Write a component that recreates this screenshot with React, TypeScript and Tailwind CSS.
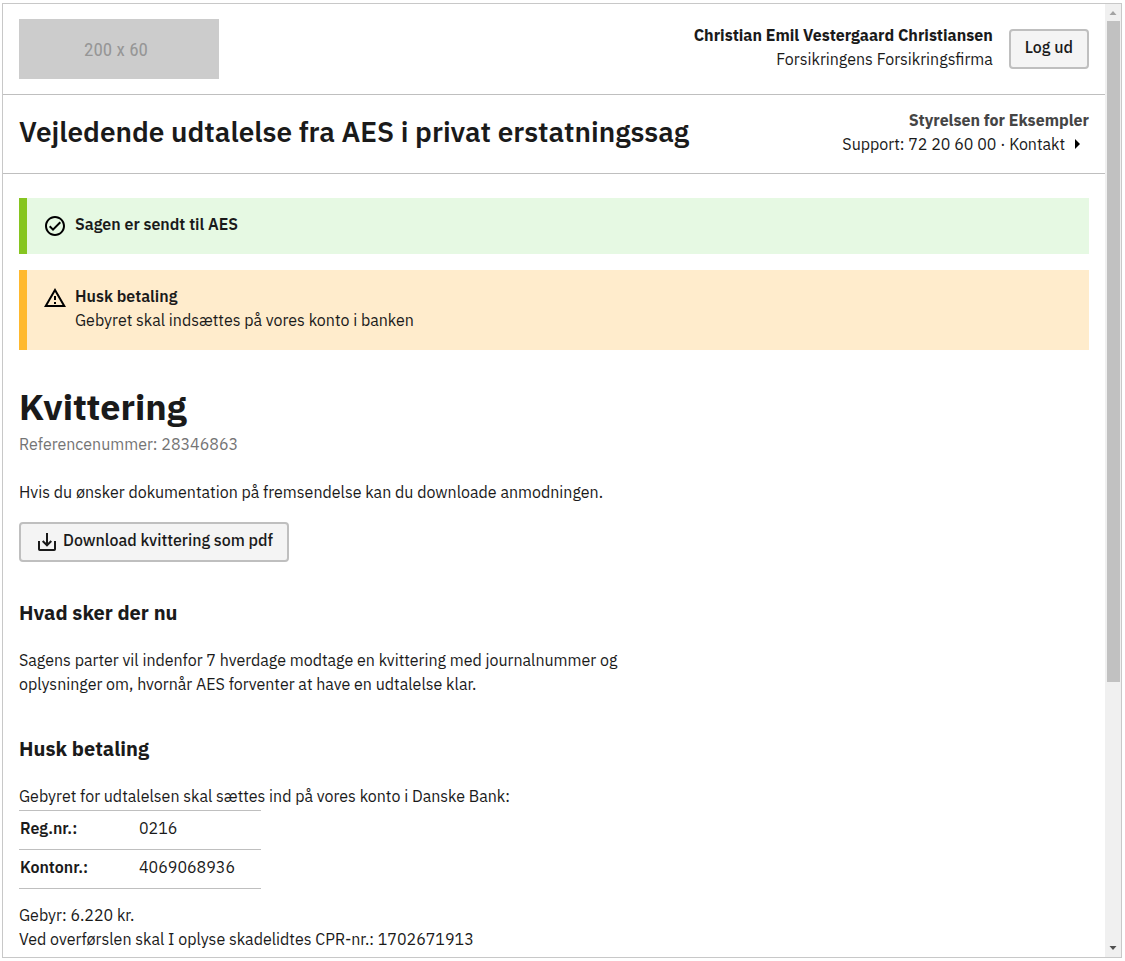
import type { ReactNode } from "react";

function CheckCircleIcon() {
  return (
    <svg viewBox="0 0 24 24" className="size-6 shrink-0" aria-hidden="true">
      <path
        fill="currentColor"
        d="M16.59 7.58 10 14.17l-2.59-2.58L6 13l4 4 8-8zM12 2C6.48 2 2 6.48 2 12s4.48 10 10 10 10-4.48 10-10S17.52 2 12 2zm0 18c-4.42 0-8-3.58-8-8s3.58-8 8-8 8 3.58 8 8-3.58 8-8 8z"
      />
    </svg>
  );
}

function WarningIcon() {
  return (
    <svg viewBox="0 0 24 24" className="size-6 shrink-0" aria-hidden="true">
      <path
        fill="currentColor"
        d="M12 5.99 19.53 19H4.47L12 5.99M12 2 1 21h22L12 2zm1 14h-2v2h2v-2zm0-6h-2v4h2v-4z"
      />
    </svg>
  );
}

function DownloadIcon() {
  return (
    <svg
      viewBox="0 0 24 24"
      className="size-6 shrink-0"
      fill="none"
      stroke="currentColor"
      strokeWidth="2"
      aria-hidden="true"
    >
      <path d="M4 11v8.2a.8.8 0 0 0 .8.8h14.4a.8.8 0 0 0 .8-.8V11M12 3v12M7.7 11l4.3 4.3 4.3-4.3" />
    </svg>
  );
}

function Alert({ tone, icon, title, children }: { tone: string; icon: ReactNode; title: string; children?: ReactNode }) {
  return (
    <div role="status" className={`flex gap-2 border-l-8 px-4 pt-3.5 pb-4 ${tone}`}>
      <span className="pt-0.5 text-black">{icon}</span>
      <div className="pb-0.5">
        <p className="font-semibold">{title}</p>
        {children}
      </div>
    </div>
  );
}

function Button({ icon, className = "", children }: { icon?: ReactNode; className?: string; children: ReactNode }) {
  return (
    <button
      type="button"
      className={`flex h-10 items-center gap-1 rounded border-2 border-[#bfbfbf] bg-[#f4f4f4] px-3.5 font-medium ${className}`}
    >
      {icon}
      <span className="pb-1">{children}</span>
    </button>
  );
}

function ScrollTrack() {
  return (
    <div aria-hidden="true" className="flex w-4 shrink-0 flex-col items-center bg-[#f0f0f0]">
      <svg viewBox="0 0 16 17" className="h-[17px] w-4">
        <path fill="#a3a3a3" d="M4.5 11 8 7l3.5 4z" />
      </svg>
      <div className="w-[13px] grow-[661] bg-[#c1c1c1]" />
      <div className="grow-[258]" />
      <svg viewBox="0 0 16 17" className="h-[17px] w-4">
        <path fill="#505050" d="M4.5 6 8 10l3.5-4z" />
      </svg>
    </div>
  );
}

export default function App() {
  return (
    <div className="min-h-screen bg-white pt-[3px] pr-[3px] pb-[3px] pl-0.5 font-['IBM_Plex_Sans','Noto_Sans',sans-serif] text-base leading-6 text-[#1a1a1a]">
      <div className="flex border border-[#c8c8c8]">
        <div className="min-w-0 flex-1">
          <header className="flex items-center justify-between border-b border-[#bfbfbf] px-4 py-[15px]">
            <div className="flex h-15 w-50 items-center justify-center bg-[#ccc] pt-0.5 pr-1.5 font-['Roboto_Condensed','Arial_Narrow','Liberation_Sans',sans-serif] text-[19px] text-[#969696]">
              200 x 60
            </div>
            <div className="flex items-center gap-4">
              <div className="pb-1 text-right">
                <p className="font-bold">Christian Emil Vestergaard Christiansen</p>
                <p>Forsikringens Forsikringsfirma</p>
              </div>
              <Button>Log ud</Button>
            </div>
          </header>

          <div className="flex items-center justify-between border-b border-[#bfbfbf] px-4 pt-[13px] pb-[17px]">
            <p className="text-[28px] leading-10 font-semibold">Vejledende udtalelse fra AES i privat erstatningssag</p>
            <div className="text-right">
              <p className="font-bold text-[#454545]">Styrelsen for Eksempler</p>
              <p className="flex items-center justify-end">
                <span>Support: 72 20 60 00 ·&nbsp;</span>
                <a href="#kontakt" className="flex items-center gap-2 pr-2">
                  Kontakt
                  <svg viewBox="0 0 8 10" className="h-2.5 w-2" aria-hidden="true">
                    <path d="M2 0 7 5 2 10z" fill="#000" />
                  </svg>
                </a>
              </p>
            </div>
          </div>

          <main className="px-4 pt-6 pb-1.5">
            <div className="flex flex-col gap-4">
              <Alert tone="border-[#86c520] bg-[#e6f9e3]" icon={<CheckCircleIcon />} title="Sagen er sendt til AES" />
              <Alert tone="border-[#ffb92e] bg-[#ffeccc]" icon={<WarningIcon />} title="Husk betaling">
                <p>Gebyret skal indsættes på vores konto i banken</p>
              </Alert>
            </div>

            <h1 className="mt-8 text-4xl leading-[50px] font-bold">Kvittering</h1>
            <p className="text-[#747474]">Referencenummer: 28346863</p>

            <p className="mt-6">Hvis du ønsker dokumentation på fremsendelse kan du downloade anmodningen.</p>
            <Button icon={<DownloadIcon />} className="mt-[18px]">
              Download kvittering som pdf
            </Button>

            <h2 className="mt-[35px] text-xl leading-8 font-bold">Hvad sker der nu</h2>
            <p className="mt-[19px] max-w-[640px]">
              Sagens parter vil indenfor 7 hverdage modtage en kvittering med journalnummer og oplysninger om, hvornår
              AES forventer at have en udtalelse klar.
            </p>

            <h2 className="mt-[37px] text-xl leading-8 font-bold">Husk betaling</h2>
            <p className="mt-[19px]">Gebyret for udtalelsen skal sættes ind på vores konto i Danske Bank:</p>
            <table className="mt-0.5 w-[242px] border-collapse border-t border-[#bfbfbf] text-left">
              <tbody>
                <tr className="h-[39px] border-b border-[#bfbfbf]">
                  <th scope="row" className="w-[120px] px-px pb-1 font-semibold">Reg.nr.:</th>
                  <td className="pb-1">0216</td>
                </tr>
                <tr className="h-[39px] border-b border-[#bfbfbf]">
                  <th scope="row" className="px-px pb-1 font-semibold">Kontonr.:</th>
                  <td className="pb-1">4069068936</td>
                </tr>
              </tbody>
            </table>
            <p className="mt-3.5">Gebyr: 6.220 kr.</p>
            <p>Ved overførslen skal I oplyse skadelidtes CPR-nr.: 1702671913</p>
          </main>
        </div>
        <ScrollTrack />
      </div>
    </div>
  );
}
